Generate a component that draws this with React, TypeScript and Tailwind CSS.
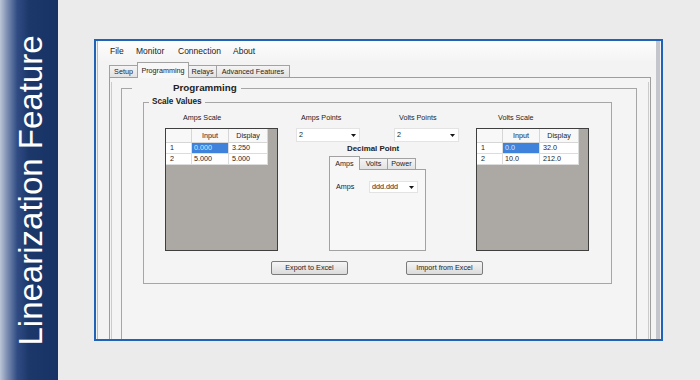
import React from "react";

function Arrow() {
  return (
    <svg width="5" height="3" viewBox="0 0 5 3" className="shrink-0">
      <path d="M0 0H5L2.5 3Z" fill="#151515" />
    </svg>
  );
}

function Combo({ value, className }: { value: string; className: string }) {
  return (
    <div
      className={
        "bg-white border border-[#e3e3e3] flex items-center justify-between pl-[2px] pr-[3px] text-[7.2px] leading-none text-[#1c1c1c] " +
        className
      }
    >
      <span>{value}</span>
      <Arrow />
    </div>
  );
}

function Grid({ rows }: { rows: [string, string][] }) {
  return (
    <div className="w-[113px] h-[123px] border border-[#3f3f3f] bg-[#aca9a5] flex flex-col text-[7.2px] leading-none text-[#1c1c1c]">
      <div className="flex h-[14px] shrink-0">
        <div className="w-[26px] bg-[#f8f8f8] border-r border-b border-[#d6d6d6]" />
        <div className="w-[37px] bg-[#f8f8f8] border-r border-b border-[#d6d6d6] flex items-center justify-center">
          Input
        </div>
        <div className="w-[39px] bg-[#f8f8f8] border-r border-b border-[#d6d6d6] flex items-center justify-center">
          Display
        </div>
      </div>
      {rows.map(([a, b], i) => (
        <div key={i} className="flex h-[11px] shrink-0">
          <div className="w-[26px] bg-white border-r border-b border-[#dcdcdc] pl-[4px] flex items-center">
            {i + 1}
          </div>
          <div
            className={
              "w-[37px] border-r border-b border-[#dcdcdc] pl-[2px] flex items-center " +
              (i === 0 ? "bg-[#3f82dc] text-[#d9e8fc]" : "bg-white")
            }
          >
            {a}
          </div>
          <div className="w-[39px] bg-white border-r border-b border-[#dcdcdc] pl-[3px] flex items-center">
            {b}
          </div>
        </div>
      ))}
    </div>
  );
}

function Tab({
  label,
  className,
  selected,
}: {
  label: string;
  className: string;
  selected?: boolean;
}) {
  return (
    <div
      className={
        "border border-b-0 border-[#a2a2a2] flex items-center justify-center leading-none shrink-0 " +
        (selected
          ? "relative z-10 bg-[#f7f7f7] -mb-px "
          : "bg-[linear-gradient(#f4f4f4,#e2e2e2)] ") +
        className
      }
    >
      {label}
    </div>
  );
}

function Button({ label }: { label: string }) {
  return (
    <div className="w-[77px] h-[14px] border border-[#7b7b7b] rounded-[2px] bg-[linear-gradient(#f5f5f5,#dbdbdb)] flex items-center justify-center text-[7.2px] leading-none text-[#1c1c1c] shrink-0">
      {label}
    </div>
  );
}

export default function App() {
  return (
    <div className="w-[700px] h-[380px] flex bg-[#ebebeb] overflow-hidden font-['Liberation_Sans','Arial',sans-serif] text-[#1c1c1c]">
      <div className="w-[58px] h-full shrink-0 flex items-center justify-center pl-[2px] bg-[linear-gradient(to_right,#bcc6d8_0%,#7e90b3_12%,#2f4b83_30%,#1c386a_50%,#173365_100%)]">
        <div className="-rotate-90 whitespace-nowrap text-white text-[33px] leading-none shrink-0">
          Linearization Feature
        </div>
      </div>

      <div className="flex-1 pl-[36px] pt-[39px]">
        <div className="w-[569px] h-[302px] border-2 border-[#1f62b6] bg-[#f4f3f3] overflow-hidden flex">
          <div className="w-px ml-px bg-[#b9b9b9] shrink-0" />
          <div className="w-[558px] flex flex-col shrink-0">
            {/* menu */}
            <div className="h-[20px] shrink-0 flex items-center pl-[12px] text-[8.5px] leading-none bg-[linear-gradient(#fdfdfd,#f4f4f4)]">
              <span className="w-[26px]">File</span>
              <span className="w-[42px]">Monitor</span>
              <span className="w-[55px]">Connection</span>
              <span>About</span>
            </div>

            {/* tabs */}
            <div className="h-[16px] shrink-0 flex items-end pl-[11px] text-[7.2px]">
              <Tab label="Setup" className="w-[29px] h-[12px]" />
              <Tab label="Programming" selected className="w-[52px] h-[16px] -ml-px" />
              <Tab label="Relays" className="w-[29px] h-[12px] -ml-px" />
              <Tab label="Advanced Features" className="w-[74px] h-[12px] -ml-px" />
            </div>

            {/* tab panel */}
            <div className="ml-[11px] w-[542px] h-[300px] border border-[#9d9d9d] shrink-0 bg-[#f5f4f4]">
              <div className="mx-px h-full border-x border-[#cbcbcb]">
                <fieldset className="ml-[9px] mt-[4px] w-[516px] h-[280px] border border-[#a6a6a6]">
                  <legend className="ml-[10px] pl-[41px] pr-[4px] text-[9.8px] font-bold leading-[12px] text-[#222]">
                    Programming
                  </legend>

                  <fieldset className="ml-[21px] mt-[3px] w-[469px] h-[187px] border border-[#a6a6a6]">
                    <legend className="ml-[5px] px-[3px] text-[8.2px] font-bold leading-[10px] text-[#222]">
                      Scale Values
                    </legend>

                    <div className="flex">
                      {/* Amps scale */}
                      <div className="ml-[21px] w-[113px] shrink-0">
                        <div className="mt-[6px] h-[10px] pl-[18px] text-[7.2px] leading-[10px]">
                          Amps Scale
                        </div>
                        <div className="mt-[5px]">
                          <Grid
                            rows={[
                              ["0.000", "3.250"],
                              ["5.000", "5.000"],
                            ]}
                          />
                        </div>
                      </div>

                      {/* middle */}
                      <div className="ml-[18px] w-[163px] shrink-0 flex flex-col">
                        <div className="flex mt-[6px]">
                          <div className="w-[64px] shrink-0">
                            <div className="h-[10px] pl-[5px] text-[7.2px] leading-[10px]">
                              Amps Points
                            </div>
                            <Combo value="2" className="mt-[5px] w-[64px] h-[14px]" />
                          </div>
                          <div className="ml-[34px] w-[65px] shrink-0">
                            <div className="h-[10px] pl-[5px] text-[7.2px] leading-[10px]">
                              Volts Points
                            </div>
                            <Combo value="2" className="mt-[5px] w-[65px] h-[14px]" />
                          </div>
                        </div>
                        <div className="mt-[2px] h-[10px] pl-[51px] text-[7.9px] font-bold leading-[10px] text-[#222]">
                          Decimal Point
                        </div>
                        <div className="ml-[33px] mt-[1px] h-[14px] flex items-end text-[7.2px]">
                          <Tab label="Amps" selected className="w-[31px] h-[14px]" />
                          <Tab label="Volts" className="w-[29px] h-[11px] -ml-px" />
                          <Tab label="Power" className="w-[29px] h-[11px] -ml-px" />
                        </div>
                        <div className="ml-[33px] w-[97px] h-[82px] border border-[#a2a2a2] bg-[#f7f7f7]">
                          <div className="mt-[11px] flex items-center">
                            <div className="ml-[6px] w-[33px] text-[7.2px] leading-none">Amps</div>
                            <Combo value="ddd.ddd" className="w-[49px] h-[12px]" />
                          </div>
                        </div>
                      </div>

                      {/* Volts scale */}
                      <div className="ml-[17px] w-[113px] shrink-0">
                        <div className="mt-[6px] h-[10px] pl-[22px] text-[7.2px] leading-[10px]">
                          Volts Scale
                        </div>
                        <div className="mt-[5px]">
                          <Grid
                            rows={[
                              ["0.0", "32.0"],
                              ["10.0", "212.0"],
                            ]}
                          />
                        </div>
                      </div>
                    </div>

                    <div className="mt-[10px] ml-[127px] flex">
                      <Button label="Export to Excel" />
                      <div className="ml-[58px]">
                        <Button label="Import from Excel" />
                      </div>
                    </div>
                  </fieldset>
                </fieldset>
              </div>
            </div>
          </div>
          <div className="w-[4px] bg-[#c3c7cd] shrink-0" />
        </div>
      </div>
    </div>
  );
}
